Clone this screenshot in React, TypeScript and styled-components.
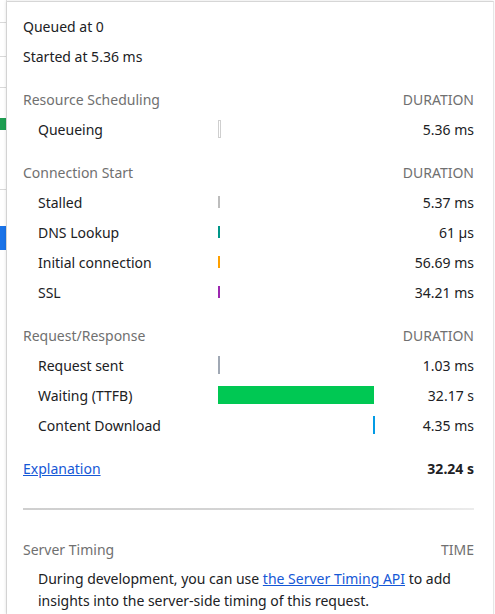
import React from "react";
import styled, { createGlobalStyle } from "styled-components";

const Global = createGlobalStyle`
  html, body { margin: 0; padding: 0; background: #ffffff; }
  body { font-family: "Segoe UI", "Noto Sans", "Open Sans", sans-serif; }
  * { box-sizing: border-box; }
`;

const Page = styled.div`
  display: flex;
  width: 495px;
  height: 614px;
  overflow: hidden;
  background: #ffffff;
`;

const Backdrop = styled.div`
  width: 7px;
  flex: none;
  display: flex;
  flex-direction: column;
  border-right: 1px solid #e4e4e4;
`;

const Mark = styled.div<{ $h: number; $color?: string; $line?: boolean }>`
  height: ${(p) => p.$h}px;
  flex: none;
  background: ${(p) => p.$color ?? "transparent"};
  border-bottom: ${(p) => (p.$line ? "1px solid #d9d9d9" : "none")};
`;

const Popover = styled.div`
  flex: 1;
  margin-top: 1px;
  margin-right: 1px;
  background: #ffffff;
  border-top: 1px solid #d6d6d6;
  border-right: 1px solid #e6e6e6;
  box-shadow: -1px 0 3px rgba(0, 0, 0, 0.12);
  padding: 9px 19px 0 16px;
  color: #202124;
  font-size: 14px;
`;

const Summary = styled.div`
  height: 30px;
  display: flex;
  align-items: center;
`;

const Table = styled.div`
  display: grid;
  grid-template-columns: 195px 156px 1fr;
`;

const Header = styled.div<{ $top: number }>`
  grid-column: 1 / -1;
  display: flex;
  justify-content: space-between;
  align-items: center;
  height: 29px;
  margin-top: ${(p) => p.$top}px;
  color: #707070;
`;

const Label = styled.div`
  height: 30px;
  display: flex;
  align-items: center;
  padding-left: 15px;
`;

const Track = styled.div`
  height: 30px;
  position: relative;
`;

const Bar = styled.div<{ $color: string; $h: number; $border?: string }>`
  position: absolute;
  top: 50%;
  height: ${(p) => p.$h}px;
  transform: translateY(-50%);
  background: ${(p) => p.$color};
  border: ${(p) => (p.$border ? `1px solid ${p.$border}` : "none")};
`;

const Duration = styled.div<{ $bold?: boolean }>`
  height: 30px;
  display: flex;
  align-items: center;
  justify-content: flex-end;
  font-weight: ${(p) => (p.$bold ? 700 : 400)};
`;

const Footer = styled.div`
  grid-column: 1 / -1;
  display: flex;
  justify-content: space-between;
  align-items: center;
  height: 30px;
  margin-top: 13px;
`;

const Link = styled.a`
  color: #1558d6;
  text-decoration: underline;
  cursor: pointer;
`;

const Divider = styled.div`
  height: 2px;
  margin: 25px 0 0;
  background: linear-gradient(to right, #cfcfcf, #d6d6d6 70%, #ececec);
`;

const ServerHeader = styled.div`
  display: flex;
  justify-content: space-between;
  align-items: center;
  height: 30px;
  margin-top: 24px;
  color: #707070;
`;

const Note = styled.p`
  margin: 4px 0 0;
  padding-left: 15px;
  line-height: 22px;
`;

type Seg = { name: string; dur: string; color: string; left: number; width: number; h: number; border?: string };

const sections: { title: string; top: number; rows: Seg[] }[] = [
  {
    title: "Resource Scheduling",
    top: 14,
    rows: [{ name: "Queueing", dur: "5.36 ms", color: "#ffffff", left: 0, width: 3, h: 18, border: "#cfcfcf" }],
  },
  {
    title: "Connection Start",
    top: 14,
    rows: [
      { name: "Stalled", dur: "5.37 ms", color: "#bdbdbd", left: 0, width: 1.5, h: 12 },
      { name: "DNS Lookup", dur: "61 µs", color: "#009688", left: 0, width: 1.5, h: 12 },
      { name: "Initial connection", dur: "56.69 ms", color: "#ffa000", left: 0, width: 1.5, h: 12 },
      { name: "SSL", dur: "34.21 ms", color: "#9c27b0", left: 0, width: 1.5, h: 12 },
    ],
  },
  {
    title: "Request/Response",
    top: 14,
    rows: [
      { name: "Request sent", dur: "1.03 ms", color: "#a0a8b4", left: 0, width: 2, h: 18 },
      { name: "Waiting (TTFB)", dur: "32.17 s", color: "#00c853", left: 0, width: 156, h: 18 },
      { name: "Content Download", dur: "4.35 ms", color: "#039be5", left: 155, width: 1.5, h: 18 },
    ],
  },
];

export default function App() {
  return (
    <>
      <Global />
      <Page>
        <Backdrop>
          <Mark $h={23} $line />
          <Mark $h={34} $line />
          <Mark $h={31} $line />
          <Mark $h={30} />
          <Mark $h={12} $color="#1e9e52" />
          <Mark $h={60} $line />
          <Mark $h={36} />
          <Mark $h={24} $color="#1a73e8" />
        </Backdrop>
        <Popover>
          <Summary>Queued at 0</Summary>
          <Summary>Started at 5.36 ms</Summary>
          <Table>
            {sections.map((s) => (
              <React.Fragment key={s.title}>
                <Header $top={s.top}>
                  <span>{s.title}</span>
                  <span>DURATION</span>
                </Header>
                {s.rows.map((r) => (
                  <React.Fragment key={r.name}>
                    <Label>{r.name}</Label>
                    <Track>
                      <Bar
                        $color={r.color}
                        $h={r.h}
                        $border={r.border}
                        style={{ left: r.left, width: r.width }}
                      />
                    </Track>
                    <Duration>{r.dur}</Duration>
                  </React.Fragment>
                ))}
              </React.Fragment>
            ))}
            <Footer>
              <Link>Explanation</Link>
              <Duration $bold>32.24 s</Duration>
            </Footer>
          </Table>
          <Divider />
          <ServerHeader>
            <span>Server Timing</span>
            <span>TIME</span>
          </ServerHeader>
          <Note>
            During development, you can use <Link>the Server Timing API</Link> to add insights into the
            server-side timing of this request.
          </Note>
        </Popover>
      </Page>
    </>
  );
}
